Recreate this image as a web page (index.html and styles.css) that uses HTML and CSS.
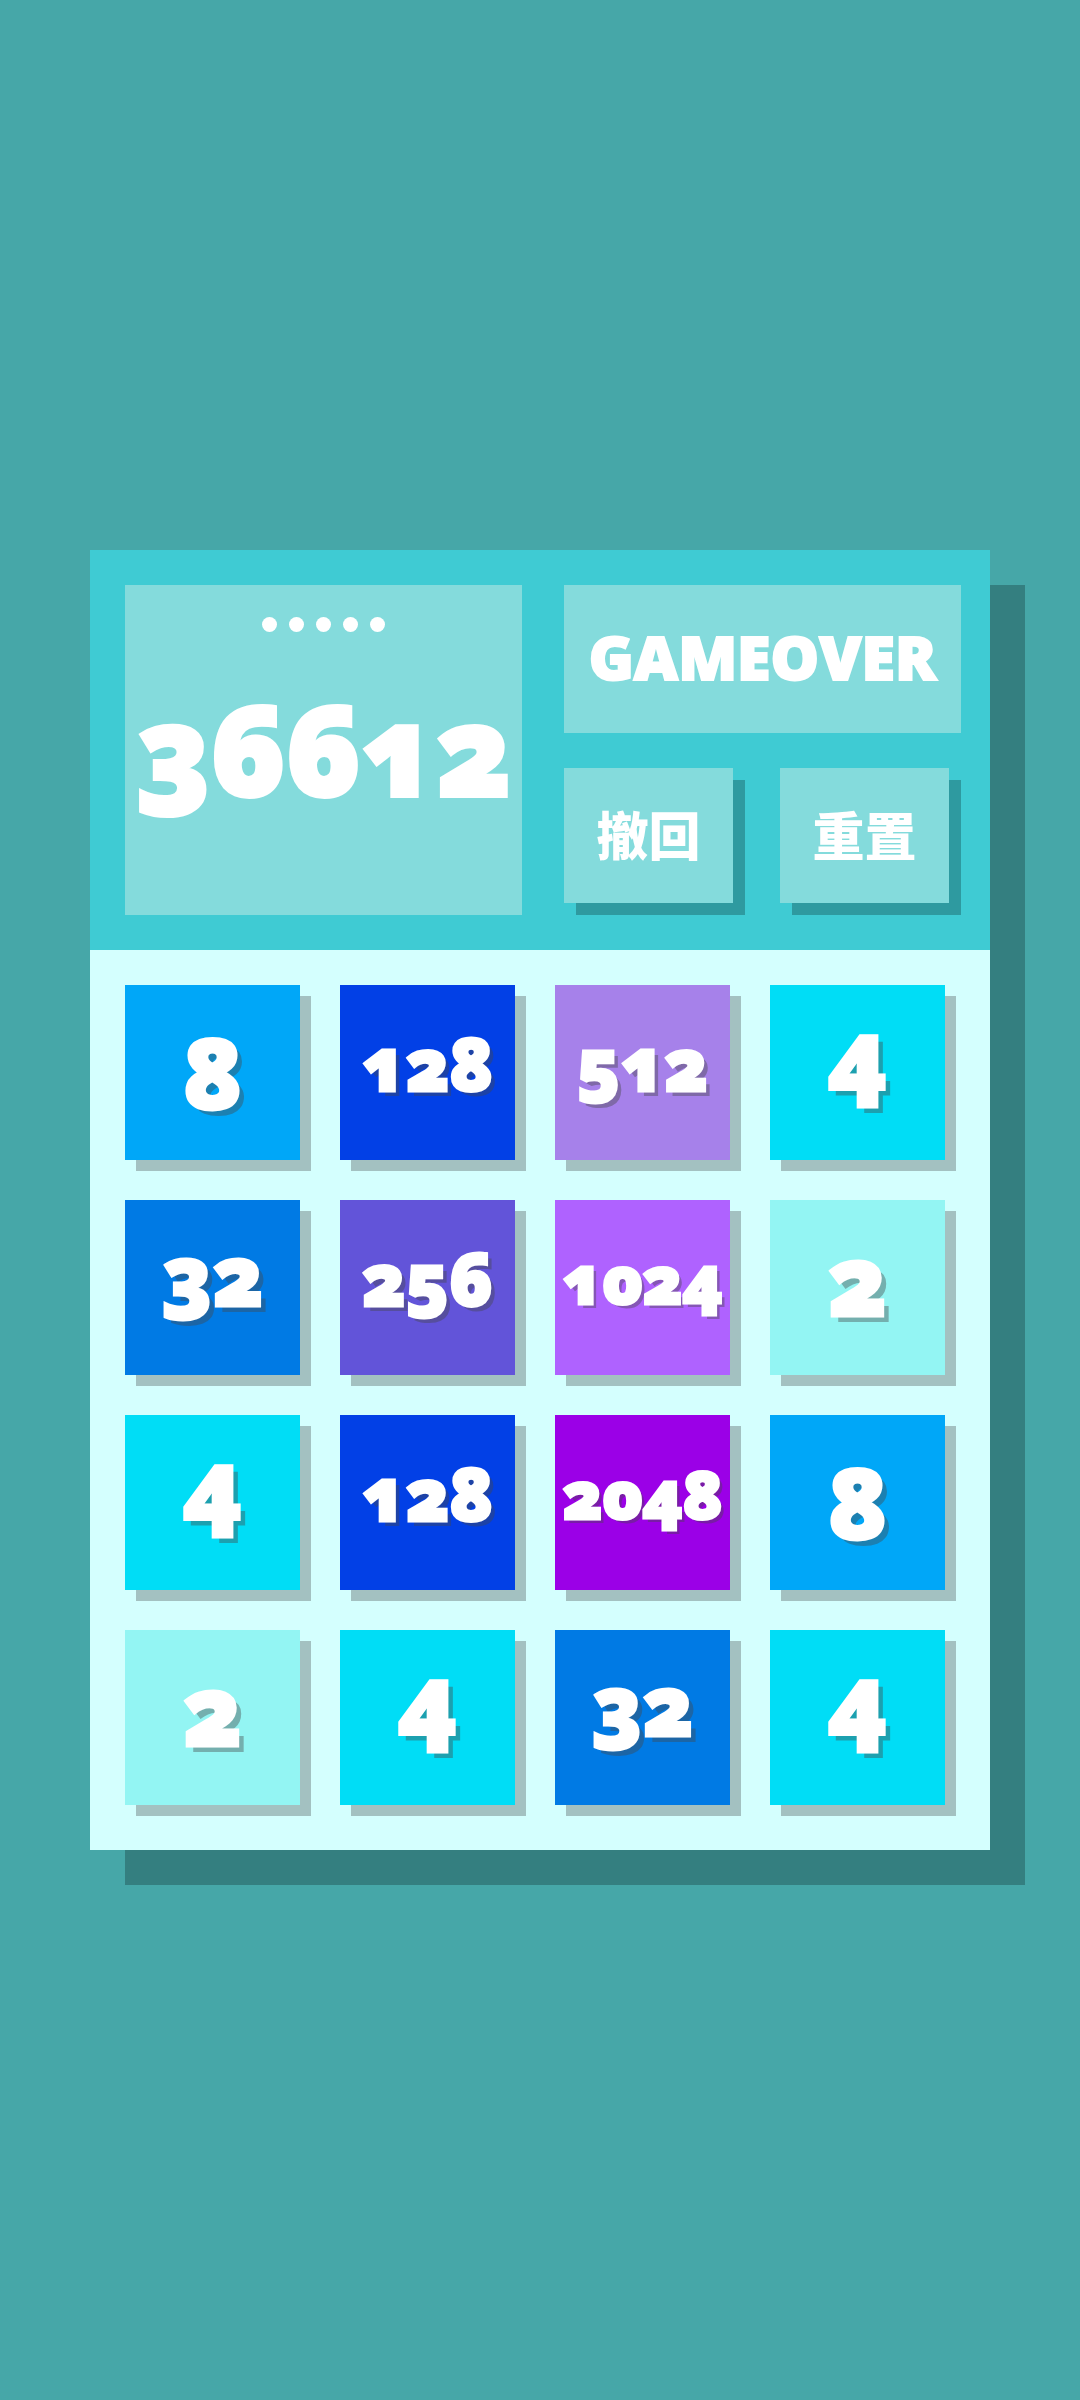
FILE: index.html
```
<!DOCTYPE html>
<html lang="zh">
<head>
    <meta charset="UTF-8">
    <meta name="viewport" content="width=device-width, initial-scale=1.0">
    <title>2048</title>
    <link rel="stylesheet" href="styles.css">
</head>
<body>
    <main class="game">
        <header class="panel">
            <div class="score">
                <div class="dots">
                    <span class="dot"></span>
                    <span class="dot"></span>
                    <span class="dot"></span>
                    <span class="dot"></span>
                    <span class="dot"></span>
                </div>
                <div class="score-value">36612</div>
            </div>
            <div class="side">
                <div class="status">GAMEOVER</div>
                <div class="actions">
                    <button class="btn" type="button">撤回</button>
                    <button class="btn" type="button">重置</button>
                </div>
            </div>
        </header>

        <section class="board">
            <div class="tile tile-8">8</div>
            <div class="tile tile-128">128</div>
            <div class="tile tile-512">512</div>
            <div class="tile tile-4">4</div>

            <div class="tile tile-32">32</div>
            <div class="tile tile-256">256</div>
            <div class="tile tile-1024">1024</div>
            <div class="tile tile-2">2</div>

            <div class="tile tile-4">4</div>
            <div class="tile tile-128">128</div>
            <div class="tile tile-2048">2048</div>
            <div class="tile tile-8">8</div>

            <div class="tile tile-2">2</div>
            <div class="tile tile-4">4</div>
            <div class="tile tile-32">32</div>
            <div class="tile tile-4">4</div>
        </section>
    </main>
</body>
</html>
```
FILE: styles.css
```
* {
    box-sizing: border-box;
}

body {
    margin: 0;
    min-height: 100vh;
    display: flex;
    justify-content: center;
    align-items: center;
    background-color: #46a7a8;
    color: #fff;
    font-family: "Open Sans", "Noto Sans CJK SC", sans-serif;
    font-weight: 800;
    font-variant-numeric: oldstyle-nums;
}

.game {
    width: calc(100% - 180px);
    max-width: 900px;
    box-shadow: 35px 35px 0 #347f80;
}

/* 顶部面板 */
.panel {
    display: grid;
    grid-template-columns: repeat(2, minmax(0, 1fr));
    gap: 42px;
    padding: 35px 29px 35px 35px;
    background-color: #3fcbd3;
}

.score,
.status,
.btn {
    background-color: #84dbdc;
}

.score {
    display: flex;
    flex-direction: column;
    align-items: center;
    padding: 32px 0;
}

.dots {
    display: flex;
    gap: 12px;
}

.dot {
    width: 15px;
    height: 15px;
    border-radius: 50%;
    background-color: #fff;
}

.score-value {
    font-size: 124px;
    line-height: 232px;
    -webkit-text-stroke: 4px #fff;
}

.side {
    display: flex;
    flex-direction: column;
    gap: 35px;
}

.status {
    height: 148px;
    font-size: 61px;
    line-height: 144px;
    text-align: center;
    -webkit-text-stroke: 2px #fff;
}

.actions {
    display: grid;
    grid-template-columns: 1fr 1fr;
    gap: 47px;
    padding: 0 12px 12px 0;
}

.btn {
    height: 135px;
    padding: 0 0 4px;
    border: none;
    color: #fff;
    font-family: "Noto Sans CJK SC", sans-serif;
    font-size: 52px;
    font-weight: 900;
    box-shadow: 12px 12px 0 #2e9aa0;
    cursor: pointer;
}

/* 棋盘 */
.board {
    display: grid;
    grid-template-columns: repeat(4, minmax(0, 1fr));
    gap: 40px;
    padding: 35px 45px 45px 35px;
    background-color: #d4fffe;
}

.tile {
    display: flex;
    justify-content: center;
    align-items: center;
    aspect-ratio: 1;
    padding-bottom: 20px;
    line-height: 1;
    box-shadow: 11px 11px 0 #a3c1c1;
    text-shadow: 6px 6px 0 rgba(70, 70, 70, 0.4);
    -webkit-text-stroke: 3px #fff;
}

.tile-2,
.tile-4,
.tile-8 {
    font-size: 98px;
}

/* 旧式数字高低不同，单独调整居中 */
.tile-4 {
    padding-bottom: 40px;
}

.tile-8 {
    padding-bottom: 4px;
}

.tile-32 {
    font-size: 84px;
    padding-bottom: 28px;
}

.tile-128,
.tile-256,
.tile-512 {
    font-size: 72px;
    text-shadow: 5px 5px 0 rgba(70, 70, 70, 0.4);
}

.tile-1024,
.tile-2048 {
    font-size: 66px;
    text-shadow: 4px 4px 0 rgba(70, 70, 70, 0.4);
}

.tile-2 { background-color: #93f5f3; }
.tile-4 { background-color: #00ddf6; }
.tile-8 { background-color: #00a7f8; }
.tile-32 { background-color: #007ae4; }
.tile-128 { background-color: #0240e6; }
.tile-256 { background-color: #6254d9; }
.tile-512 { background-color: #a681ea; }
.tile-1024 { background-color: #af62ff; }
.tile-2048 { background-color: #9b00e7; }
```
